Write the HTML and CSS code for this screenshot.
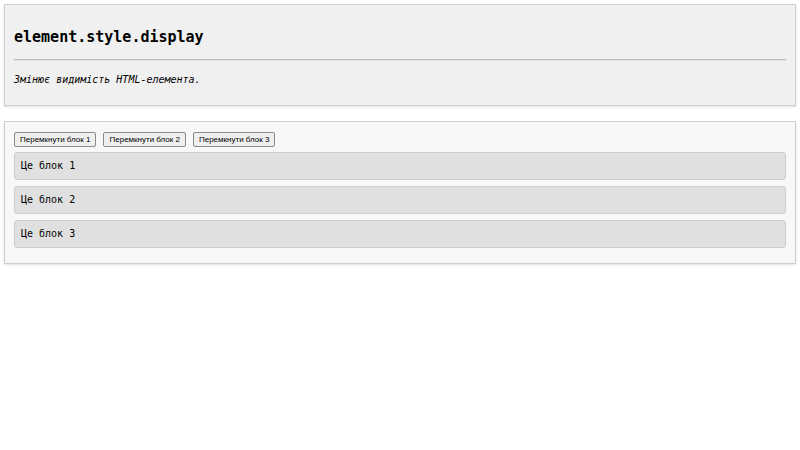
FILE: index.html
```html
<!DOCTYPE html>
<html lang="uk">
<head>
<meta charset="utf-8">
<title>element.style.display</title>
<link rel="stylesheet" href="styles.css">
</head>
<body>
<section class="panel panel-head">
  <h1 class="title">element.style.display</h1>
  <hr class="rule">
  <p class="desc">Змінює видимість HTML-елемента.</p>
</section>
<section class="panel panel-demo">
  <div class="buttons">
    <button class="btn" type="button">Перемкнути блок 1</button>
    <button class="btn" type="button">Перемкнути блок 2</button>
    <button class="btn" type="button">Перемкнути блок 3</button>
  </div>
  <div class="block">Це блок 1</div>
  <div class="block">Це блок 2</div>
  <div class="block">Це блок 3</div>
</section>
</body>
</html>
```
FILE: styles.css
```css
html, body {
  margin: 0;
  background: #ffffff;
}
body {
  padding: 4px;
  font-family: "DejaVu Sans Mono", monospace;
  color: #000;
}
.panel {
  border: 1px solid #cfcfcf;
  padding: 10px 9px;
  margin-bottom: 15px;
  box-shadow: 0 1px 2px rgba(0,0,0,0.12);
}
.panel-head {
  background: #f0f0f0;
  padding-top: 12px;
  padding-bottom: 18px;
}
.panel-demo {
  background: #f8f8f8;
  padding-top: 10px;
  padding-bottom: 15px;
}
.title {
  font-size: 15px;
  font-weight: bold;
  line-height: 18px;
  margin: 11px 0 13px;
}
.rule {
  border: none;
  border-top: 1px solid #bdbdbd;
  border-bottom: 1px solid #e2e2e2;
  margin: 0 0 12px;
}
.desc {
  font-size: 10px;
  font-style: italic;
  line-height: 14px;
  margin: 0;
}
.buttons {
  display: flex;
  gap: 7px;
  margin-bottom: 5px;
}
.btn {
  font-family: "Liberation Sans", Arial, sans-serif;
  font-size: 8px;
  padding: 1px 5px;
  height: 15px;
  line-height: 11px;
  background: #efefef;
  border: 1px solid #8a8a8a;
  border-radius: 2px;
  color: #000;
}
.block {
  background: #e0e0e0;
  border: 1px solid #cdcdcd;
  border-radius: 3px;
  height: 26px;
  line-height: 26px;
  padding: 0 6px;
  font-size: 10px;
  margin-bottom: 6px;
}
.block:last-child {
  margin-bottom: 0;
}
```
